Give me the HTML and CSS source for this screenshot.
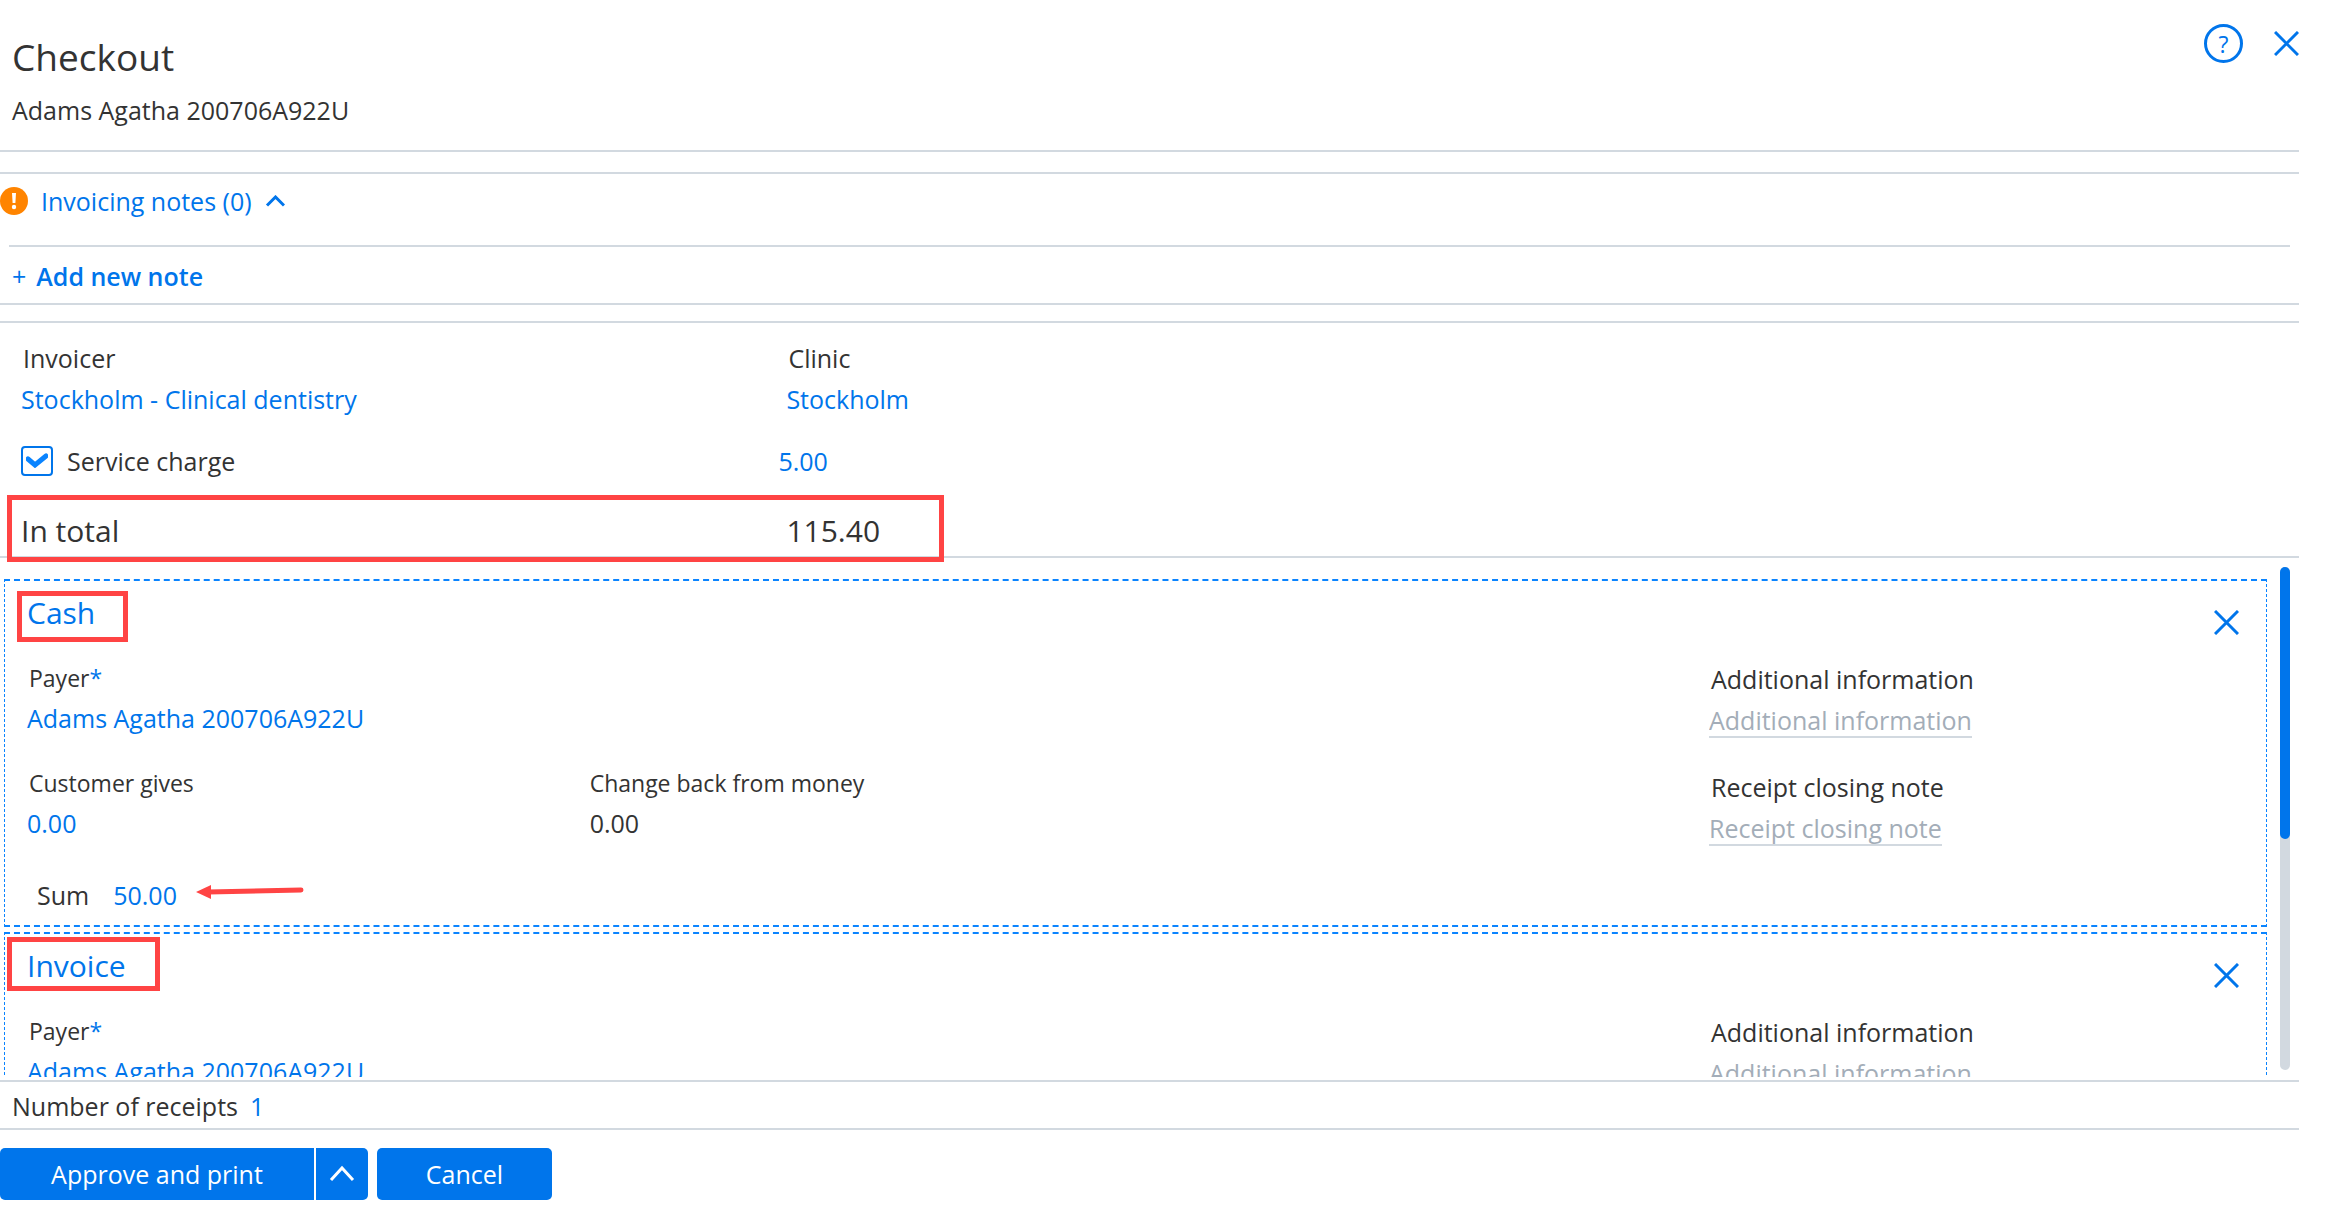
FILE: index.html
```
<!DOCTYPE html>
<html lang="en">
<head>
  <meta charset="UTF-8">
  <meta name="viewport" content="width=device-width, initial-scale=1.0">
  <title>Checkout</title>
  <link rel="stylesheet" href="styles.css">
</head>
<body>
  <div class="checkout">
    <header class="header">
      <div>
        <h1 class="title">Checkout</h1>
        <div class="patient">Adams Agatha 200706A922U</div>
      </div>
      <div class="header-buttons">
        <button type="button" class="help-button" aria-label="Help">?</button>
        <button type="button" class="close-button" aria-label="Close">
          <svg width="25" height="25" viewBox="0 0 25 25"><path d="M1 1L24 24M24 1L1 24"/></svg>
        </button>
      </div>
    </header>

    <section class="notes">
      <button type="button" class="notes-toggle">
        <svg class="warning-icon" width="28" height="28" viewBox="0 0 28 28">
          <circle cx="14" cy="14" r="14" fill="#ff8400"/>
          <path d="M12 6h4l-.6 10h-2.8z" fill="#fff"/>
          <circle cx="14" cy="20" r="2.2" fill="#fff"/>
        </svg>
        <span>Invoicing notes (0)</span>
        <svg class="chevron" width="20" height="12" viewBox="0 0 20 12"><path d="M2 10.500L10.500 2L19 10.500"/></svg>
      </button>
      <div class="notes-add">
        <button type="button" class="add-button"><span class="plus">+</span>Add new note</button>
      </div>
    </section>

    <section class="summary">
      <div class="summary-row">
        <div class="field">
          <div class="label">Invoicer</div>
          <a href="#" class="value">Stockholm - Clinical dentistry</a>
        </div>
        <div class="field">
          <div class="label">Clinic</div>
          <a href="#" class="value">Stockholm</a>
        </div>
      </div>
      <div class="summary-row service-row">
        <label class="check-label">
          <input type="checkbox" class="checkbox" checked>
          <svg class="check-mark" width="22" height="15" viewBox="0 0 22 15"><path d="M2 6L9 12L20 3"/></svg>
          Service charge
        </label>
        <input type="text" class="input service-sum" value="5.00" aria-label="Service charge sum">
      </div>
      <div class="summary-row total-row">
        <span>In total</span>
        <span>115.40</span>
      </div>
    </section>

    <section class="payments">
      <div class="payment-list">
        <article class="payment">
          <div class="payment-head">
            <h2 class="payment-title mark-cash">Cash</h2>
            <button type="button" class="close-button" aria-label="Remove cash">
              <svg width="25" height="25" viewBox="0 0 25 25"><path d="M1 1L24 24M24 1L1 24"/></svg>
            </button>
          </div>
          <div class="payment-body">
            <div class="payment-main">
              <div class="field">
                <div class="label small">Payer<span class="required">*</span></div>
                <a href="#" class="value">Adams Agatha 200706A922U</a>
              </div>
              <div class="money-row">
                <div class="field">
                  <label class="label small" for="gives">Customer gives</label>
                  <input type="text" class="input" id="gives" value="0.00">
                </div>
                <div class="field">
                  <div class="label small">Change back from money</div>
                  <div class="label">0.00</div>
                </div>
              </div>
              <div class="sum-row">
                <label for="cashSum">Sum</label>
                <input type="text" class="input" id="cashSum" value="50.00">
                <svg class="arrow" width="108" height="16" viewBox="0 0 108 16">
                  <path d="M12 8L105 6" stroke="#ff4444" stroke-width="5" stroke-linecap="round"/>
                  <path d="M0 8L15 1V15z" fill="#ff4444"/>
                </svg>
              </div>
            </div>
            <div class="payment-extra">
              <div class="field">
                <label class="label" for="cashInfo">Additional information</label>
                <input type="text" class="input underlined" id="cashInfo" placeholder="Additional information">
              </div>
              <div class="field">
                <label class="label" for="cashNote">Receipt closing note</label>
                <input type="text" class="input underlined" id="cashNote" placeholder="Receipt closing note">
              </div>
            </div>
          </div>
        </article>

        <article class="payment">
          <div class="payment-head">
            <h2 class="payment-title mark-invoice">Invoice</h2>
            <button type="button" class="close-button" aria-label="Remove invoice">
              <svg width="25" height="25" viewBox="0 0 25 25"><path d="M1 1L24 24M24 1L1 24"/></svg>
            </button>
          </div>
          <div class="payment-body">
            <div class="payment-main">
              <div class="field">
                <div class="label small">Payer<span class="required">*</span></div>
                <a href="#" class="value">Adams Agatha 200706A922U</a>
              </div>
            </div>
            <div class="payment-extra">
              <div class="field">
                <label class="label" for="invoiceInfo">Additional information</label>
                <input type="text" class="input underlined" id="invoiceInfo" placeholder="Additional information">
              </div>
            </div>
          </div>
        </article>
      </div>
      <div class="scroll-track"><div class="scroll-thumb"></div></div>
    </section>

    <footer class="footer">
      <div class="receipts">
        <label for="receipts">Number of receipts</label>
        <input type="text" class="input" id="receipts" value="1">
      </div>
      <div class="actions">
        <div class="split-button">
          <button type="button" class="button approve">Approve and print</button>
          <button type="button" class="button more" aria-label="More options">
            <svg width="26" height="18" viewBox="0 0 26 18"><path d="M2 15L13 3L24 15"/></svg>
          </button>
        </div>
        <button type="button" class="button cancel">Cancel</button>
      </div>
    </footer>
  </div>
</body>
</html>
```
FILE: styles.css
```
*,
*::after {
  box-sizing: border-box;
}
body {
  margin: 0;
  background-color: #fff;
  color: #333;
  font-family: "Segoe UI", "Open Sans", "Noto Sans", sans-serif;
  font-size: 25px;
  line-height: 36px;
}
button,
input {
  font: inherit;
  color: inherit;
  padding: 0;
  border: none;
  background: none;
}
button {
  cursor: pointer;
}
svg {
  display: block;
  fill: none;
}
.checkout {
  display: flex;
  flex-direction: column;
  height: 100vh;
  padding-right: 38px;
}

/* header */
.header {
  display: flex;
  justify-content: space-between;
  padding: 31px 0 22px 12px;
  border-bottom: 2px solid #d2d9e0;
}
.title {
  margin: 0 0 9px;
  font-size: 37px;
  font-weight: normal;
  line-height: 52px;
}
.header-buttons {
  display: flex;
  align-items: center;
  gap: 31px;
  height: 39px;
  margin-top: -7px;
}
.help-button {
  width: 39px;
  height: 39px;
  border: 3px solid #0075eb;
  border-radius: 50%;
  color: #0075eb;
  font-size: 23px;
  line-height: 32px;
}
.close-button svg {
  stroke: #0075eb;
  stroke-width: 3;
}

/* notes */
.notes {
  margin-top: 20px;
  border-top: 2px solid #d2d9e0;
  border-bottom: 2px solid #d2d9e0;
}
.notes-toggle {
  display: flex;
  align-items: center;
  gap: 13px;
  padding: 9px 0 26px;
  color: #0075eb;
}
.chevron {
  stroke: #0075eb;
  stroke-width: 3;
}
.notes-add {
  margin: 0 9px;
  padding: 11px 3px 9px;
  border-top: 2px solid #d2d9e0;
}
.add-button {
  display: block;
  color: #0075eb;
  font-weight: 600;
}
.plus {
  margin-right: 10px;
  font-weight: normal;
}

/* summary */
.summary {
  margin-top: 16px;
  padding: 17px 0 3px 21px;
  border-top: 2px solid #d2d9e0;
  border-bottom: 2px solid #d2d9e0;
}
.summary-row {
  display: grid;
  grid-template-columns: 33.6% 1fr;
}
.field {
  display: flex;
  flex-direction: column;
  align-items: flex-start;
  gap: 4px;
}
.summary .field {
  gap: 5px;
}
.label {
  padding-left: 2px;
}
.small {
  font-size: 23px;
}
.value {
  color: #0075eb;
  text-decoration: none;
}
.input {
  display: block;
  height: 36px;
  color: #0075eb;
  field-sizing: content;
}
.service-row {
  margin: 26px 0 30px;
}
.check-label {
  display: flex;
  align-items: center;
  position: relative;
}
.checkbox {
  appearance: none;
  width: 32px;
  height: 30px;
  margin: 0 14px 0 0;
  border: 2px solid #0075eb;
  border-radius: 4px;
}
.check-mark {
  position: absolute;
  left: 5px;
  top: 10px;
  stroke: #0a84ff;
  stroke-width: 5;
  stroke-linecap: round;
  visibility: hidden;
}
.checkbox:checked + .check-mark {
  visibility: visible;
}
.service-sum {
  margin-left: -8px;
}
.total-row {
  position: relative;
  font-size: 30px;
  line-height: 44px;
}
.total-row::after {
  content: "";
  position: absolute;
  top: -14px;
  left: -14px;
  width: 937px;
  height: 67px;
  border: 5px solid #ff4444;
}

/* payments */
.payments {
  display: flex;
  flex: 1;
  min-height: 0;
  gap: 13px;
  margin-bottom: 3px;
  padding-right: 9px;
  overflow: hidden;
}
.payment-list {
  flex: 1;
  padding: 21px 0 0 4px;
}
.payment {
  margin-bottom: 5px;
  padding: 10px 27px 12px 22px;
  border: 1px dashed #0a84ff;
  border-width: 2px 1px;
}
.payment-head {
  display: flex;
  justify-content: space-between;
  align-items: flex-end;
  margin-bottom: 25px;
}
.payment-title {
  position: relative;
  margin: 0;
  color: #0075eb;
  font-size: 30px;
  font-weight: normal;
  line-height: 44px;
}
.payment-title::after {
  content: "";
  position: absolute;
  border: 5px solid #ff4444;
}
.mark-cash::after {
  top: 0;
  left: -10px;
  width: 111px;
  height: 51px;
}
.mark-invoice::after {
  top: -7px;
  left: -20px;
  width: 153px;
  height: 54px;
}
.payment-body {
  display: grid;
  grid-template-columns: 1fr 530px;
}
.payment-main {
  display: flex;
  flex-direction: column;
  gap: 29px;
}
.required {
  color: #0075eb;
}
.money-row {
  display: grid;
  grid-template-columns: 1fr 2fr;
}
.sum-row {
  display: flex;
  align-items: center;
  gap: 24px;
  padding: 7px 0 0 10px;
}
.arrow {
  margin: 0 0 6px -5px;
}
.payment-extra {
  display: flex;
  flex-direction: column;
  gap: 31px;
  padding-top: 1px;
}
.underlined {
  height: 37px;
  padding-top: 3px;
  border-bottom: 2px solid #d2d9e0;
}
.underlined::placeholder {
  color: #a3adb8;
}
.scroll-track {
  width: 10px;
  margin: 9px 0 7px;
  border-radius: 5px;
  background-color: #d2d9e0;
}
.scroll-thumb {
  height: 54%;
  border-radius: 5px;
  background-color: #0075eb;
}

/* footer */
.footer {
  border-top: 2px solid #d2d9e0;
}
.receipts {
  display: flex;
  gap: 12px;
  padding: 6px 12px 4px;
  border-bottom: 2px solid #d2d9e0;
}
.actions {
  display: flex;
  gap: 9px;
  padding: 18px 0 15px;
}
.split-button {
  display: flex;
  gap: 2px;
}
.button {
  height: 52px;
  border-radius: 5px;
  background-color: #0075eb;
  color: #fff;
}
.approve {
  width: 314px;
  border-radius: 5px 0 0 5px;
}
.more {
  display: flex;
  align-items: center;
  justify-content: center;
  width: 52px;
  border-radius: 0 5px 5px 0;
}
.more svg {
  stroke: #fff;
  stroke-width: 3;
}
.cancel {
  width: 175px;
}
```
